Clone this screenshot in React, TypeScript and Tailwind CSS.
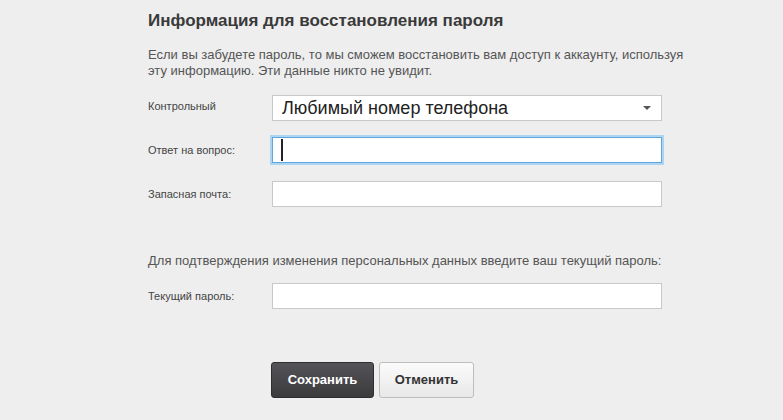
import React from 'react';

const Field = ({ label, focused, className = '' }: { label: string; focused?: boolean; className?: string }) => (
  <div className={`flex items-center ${className}`}>
    <label className="w-[124px] text-[11px] text-[#444]">{label}</label>
    <div
      className={`relative w-[390px] h-[26px] bg-white border ${
        focused ? 'border-[#5ea6dc] ring-2 ring-[#acd5f2]' : 'border-[#c8c8c8]'
      }`}
    >
      {focused && <span className="absolute left-[8px] top-[1px] bottom-[1px] w-[2px] bg-[#222]" />}
    </div>
  </div>
);

export default function App() {
  return (
    <div className="min-h-screen bg-[#eeeeee] font-['Liberation_Sans',Arial,sans-serif]">
      <div className="ml-[148px] w-[514px] pt-[11px]">
        <h2 className="text-[17px] leading-[20px] font-bold text-[#3a3a3a]">
          Информация для восстановления пароля
        </h2>
        <p className="mt-[16px] text-[13px] leading-[16px] text-[#555] w-[540px]">
          Если вы забудете пароль, то мы сможем восстановить вам доступ к аккаунту, используя
          <br />
          эту информацию. Эти данные никто не увидит.
        </p>

        <div className="mt-[16px] flex items-center">
          <label className="w-[124px] text-[11px] text-[#444] -mt-[3px]">Контрольный</label>
          <div className="w-[390px] h-[26px] bg-white border border-[#c8c8c8] flex items-center justify-between pl-[9px] pr-[10px]">
            <span className="text-[18px] text-[#222]">Любимый номер телефона</span>
            <svg width="8" height="4" viewBox="0 0 8 4">
              <path d="M0 0 L8 0 L4 4 Z" fill="#555" />
            </svg>
          </div>
        </div>

        <Field label="Ответ на вопрос:" focused className="mt-[16px]" />
        <Field label="Запасная почта:" className="mt-[18px]" />

        <p className="mt-[46px] text-[13px] leading-[16px] text-[#555] w-[540px]">
          Для подтверждения изменения персональных данных введите ваш текущий пароль:
        </p>

        <Field label="Текущий пароль:" className="mt-[14px]" />

        <div className="mt-[53px] ml-[123px] flex gap-[5px]">
          <button className="w-[103px] h-[36px] rounded-[3px] border border-[#2e2e30] bg-gradient-to-b from-[#545458] to-[#3b3b3e] text-white text-[13px] font-bold">
            Сохранить
          </button>
          <button className="w-[95px] h-[36px] rounded-[3px] border border-[#bdbdbd] bg-gradient-to-b from-[#fbfbfb] to-[#e8e8e8] text-[#333] text-[13px] font-bold">
            Отменить
          </button>
        </div>
      </div>
    </div>
  );
}
